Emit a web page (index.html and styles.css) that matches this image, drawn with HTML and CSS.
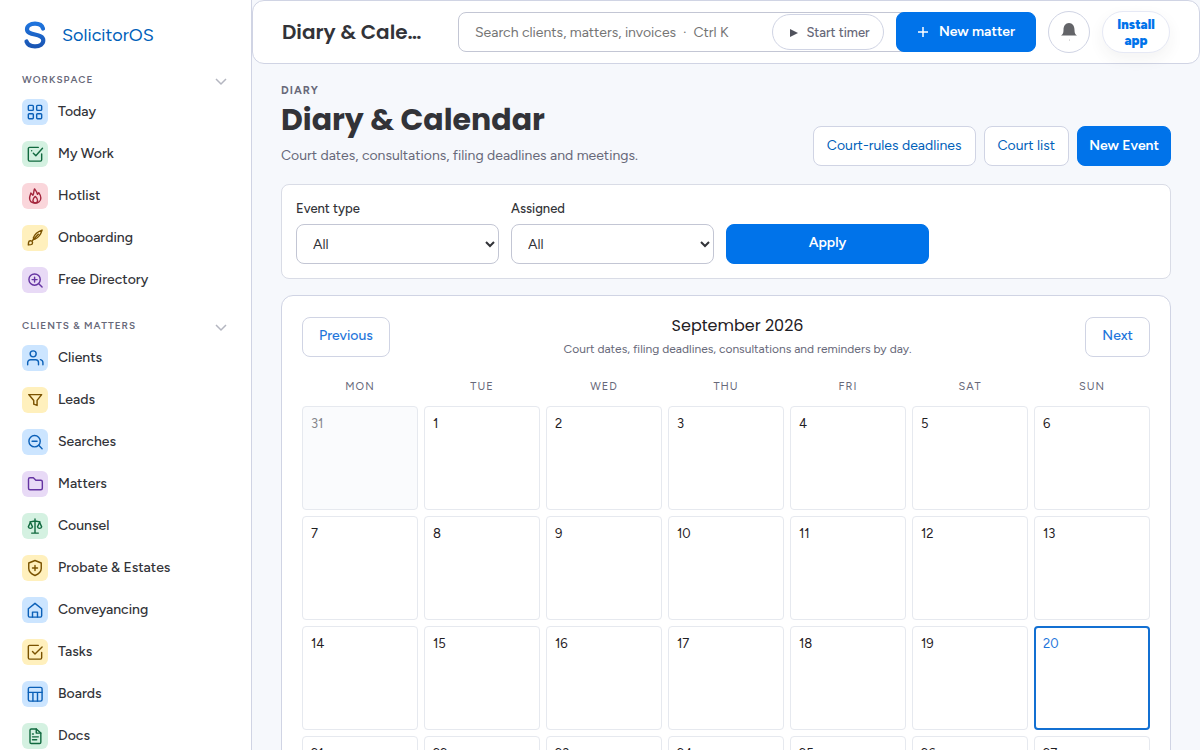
FILE: index.html
```
<!DOCTYPE html>
<html lang="en">
<head>
    <meta charset="UTF-8">
    <meta name="viewport" content="width=device-width, initial-scale=1.0">
    <title>Diary &amp; Calendar - SolicitorOS</title>
    <link rel="stylesheet" href="styles.css">
</head>
<body>
    <div class="app">
        <aside class="sidebar">
            <a class="brand" href="#">
                <svg class="brand-mark" viewBox="0 0 26 30" aria-hidden="true">
                    <defs>
                        <linearGradient id="brandFill" x1="0" y1="0" x2="0" y2="1">
                            <stop offset="0" stop-color="#1f74dd"/>
                            <stop offset="1" stop-color="#1a56b4"/>
                        </linearGradient>
                    </defs>
                    <path d="M21 8.500C20 5.200 17 3.700 13 3.700C8.300 3.700 5 6 5 9.300C5 16.500 21.300 12.500 21.300 20.300C21.300 24 18 26.300 13 26.300C8.500 26.300 5.500 24.500 4.500 21.500" fill="none" stroke="url(#brandFill)" stroke-width="4.200" stroke-linecap="round"/>
                </svg>
                <span>SolicitorOS</span>
            </a>

            <nav>
                <button class="nav-heading" type="button">
                    <span>Workspace</span>
                    <svg class="chevron" viewBox="0 0 12 12"><path d="M1 4l5 5 5-5"/></svg>
                </button>
                <a class="nav-item" href="#">
                    <span class="nav-icon blue"><svg viewBox="0 0 24 24"><rect x="4" y="4" width="6" height="6" rx="1"/><rect x="14" y="4" width="6" height="6" rx="1"/><rect x="4" y="14" width="6" height="6" rx="1"/><rect x="14" y="14" width="6" height="6" rx="1"/></svg></span>
                    Today
                </a>
                <a class="nav-item" href="#">
                    <span class="nav-icon green"><svg viewBox="0 0 24 24"><path d="M20 12v7a1.500 1.500 0 0 1-1.500 1.500h-13A1.500 1.500 0 0 1 4 19V5.500A1.500 1.500 0 0 1 5.500 4H16"/><path d="M10 11l3 3 8-9M8 8v.01"/></svg></span>
                    My Work
                </a>
                <a class="nav-item" href="#">
                    <span class="nav-icon red"><svg viewBox="0 0 24 24"><path d="M12 20.500c-4 0-6.500-2.300-6.500-6 0-2.500 1-3.500 1.500-6l2.500 2.500c1.500-2 .5-4.500 2-7.500 1.500 2 3 4 3.500 6.500l1.500-2c1.500 2 2.500 4 2.500 6.500 0 3.700-3 6-7 6z"/><path d="M12.300 12.500c-1.500 1.500-2.800 2.700-2.800 4.800 0 2 1.200 3 2.800 3s2.800-1 2.800-3c0-2.100-1.300-3.300-2.800-4.800z"/></svg></span>
                    Hotlist
                </a>
                <a class="nav-item" href="#">
                    <span class="nav-icon yellow"><svg viewBox="0 0 24 24"><path d="M20.500 2.500C16 4 11.500 7.500 10 12l1.500 1.500C15.500 12 19 7.500 20.500 2.500z"/><path d="M16 7.500L9 15"/><path d="M4 20.300l.3-3a2.400 2.400 0 1 1 2.700 2.700z"/></svg></span>
                    Onboarding
                </a>
                <a class="nav-item" href="#">
                    <span class="nav-icon purple"><svg viewBox="0 0 24 24"><circle cx="11.500" cy="11.500" r="6.800"/><path d="M8.500 11.500h6M11.500 8.500v6M16.500 16.500l4 4"/></svg></span>
                    Free Directory
                </a>

                <button class="nav-heading" type="button">
                    <span>Clients &amp; Matters</span>
                    <svg class="chevron" viewBox="0 0 12 12"><path d="M1 4l5 5 5-5"/></svg>
                </button>
                <a class="nav-item" href="#">
                    <span class="nav-icon blue"><svg viewBox="0 0 24 24"><circle cx="9.800" cy="7" r="3.600"/><path d="M3.200 20v-2.500a3.500 3.500 0 0 1 3.500-3.500h6a3.500 3.500 0 0 1 3.500 3.500V20M18.500 14a3.700 3.700 0 0 1 3 3.500V20"/></svg></span>
                    Clients
                </a>
                <a class="nav-item" href="#">
                    <span class="nav-icon yellow"><svg viewBox="0 0 24 24"><path d="M4.500 5.500h15.500l-5.500 7v6l-4-1.500v-4.500z"/></svg></span>
                    Leads
                </a>
                <a class="nav-item" href="#">
                    <span class="nav-icon blue"><svg viewBox="0 0 24 24"><circle cx="11.500" cy="11" r="6.800"/><path d="M8.500 11h6M16.500 16l4 4"/></svg></span>
                    Searches
                </a>
                <a class="nav-item" href="#">
                    <span class="nav-icon purple"><svg viewBox="0 0 24 24"><path d="M6 4.500h4l3 3h6a1.800 1.800 0 0 1 1.800 1.800V17a1.800 1.800 0 0 1-1.800 1.800H6A1.800 1.800 0 0 1 4.200 17V6.300A1.800 1.800 0 0 1 6 4.500z"/></svg></span>
                    Matters
                </a>
                <a class="nav-item" href="#">
                    <span class="nav-icon green"><svg viewBox="0 0 24 24"><path d="M12 3.500V20.500M8 20.500h8M6 7l6-1 6 1"/><path d="M6.500 7.500L4 13a2.600 2.600 0 0 0 5 0zM17.500 7.500L15 13a2.600 2.600 0 0 0 5 0z"/></svg></span>
                    Counsel
                </a>
                <a class="nav-item" href="#">
                    <span class="nav-icon yellow"><svg viewBox="0 0 24 24"><path d="M12 3l7.500 3v6.500c0 4-3 6.500-7.500 8.500-4.500-2-7.500-4.500-7.500-8.500V6z"/><path d="M9 12h6M12 9v6"/></svg></span>
                    Probate &amp; Estates
                </a>
                <a class="nav-item" href="#">
                    <span class="nav-icon blue"><svg viewBox="0 0 24 24"><path d="M4 10.500L12 4l8 6.500V19a1.500 1.500 0 0 1-1.500 1.500h-13A1.500 1.500 0 0 1 4 19z"/><path d="M9 20.500V14.500h6v6"/></svg></span>
                    Conveyancing
                </a>
                <a class="nav-item" href="#">
                    <span class="nav-icon yellow"><svg viewBox="0 0 24 24"><path d="M20 12.500V19a1.500 1.500 0 0 1-1.500 1.500h-13A1.500 1.500 0 0 1 4 19V5.500A1.500 1.500 0 0 1 5.500 4H16"/><path d="M9 11.500l3 3L20.500 6"/></svg></span>
                    Tasks
                </a>
                <a class="nav-item" href="#">
                    <span class="nav-icon blue"><svg viewBox="0 0 24 24"><rect x="4" y="4" width="16.500" height="16.500" rx="1.800"/><path d="M4 10h16.500M9.500 10v10.500M15 10v10.500"/></svg></span>
                    Boards
                </a>
                <a class="nav-item" href="#">
                    <span class="nav-icon green"><svg viewBox="0 0 24 24"><path d="M13.500 3.500V8.500H19"/><path d="M17.500 21h-10A1.500 1.500 0 0 1 6 19.500V5A1.500 1.500 0 0 1 7.500 3.500h6L19 8.500v11a1.500 1.500 0 0 1-1.500 1.500z"/><path d="M9 9.500h1M9 13h7M9 16.500h5"/></svg></span>
                    Docs
                </a>
            </nav>
        </aside>

        <div class="page">
            <header class="topbar">
                <div class="topbar-title">Diary &amp; Calendar</div>
                <input class="search" type="search" aria-label="Search" placeholder="Search clients, matters, invoices  ·  Ctrl K">
                <div class="topbar-actions">
                    <button class="timer" type="button">
                        <svg viewBox="0 0 8 10" aria-hidden="true"><path d="M0 1l8 4-8 4z"/></svg>
                        Start timer
                    </button>
                    <button class="btn btn-primary btn-matter" type="button">
                        <svg viewBox="0 0 12 12" aria-hidden="true"><path d="M6 1v10M1 6h10"/></svg>
                        New matter
                    </button>
                    <button class="bell" type="button" aria-label="Notifications">
                        <svg viewBox="0 0 16 18" aria-hidden="true"><path d="M0 12.500c1.500-.8 2.500-2.200 2.500-5.500C2.500 3 4.500 0 8 0s5.500 3 5.500 7c0 3.300 1 4.700 2.500 5.500z"/><circle cx="8.500" cy="17" r=".4"/></svg>
                    </button>
                    <button class="install" type="button">Install app</button>
                </div>
            </header>

            <main class="content">
                <div class="page-head">
                    <div>
                        <div class="eyebrow">Diary</div>
                        <h1>Diary &amp; Calendar</h1>
                        <p class="lead">Court dates, consultations, filing deadlines and meetings.</p>
                    </div>
                    <div class="page-actions">
                        <a class="btn" href="#">Court-rules deadlines</a>
                        <a class="btn" href="#">Court list</a>
                        <a class="btn btn-primary" href="#">New Event</a>
                    </div>
                </div>

                <form class="filters">
                    <div class="field">
                        <label for="event-type">Event type</label>
                        <select id="event-type">
                            <option>All</option>
                        </select>
                    </div>
                    <div class="field">
                        <label for="assigned">Assigned</label>
                        <select id="assigned">
                            <option>All</option>
                        </select>
                    </div>
                    <button class="btn btn-primary btn-raised" type="button">Apply</button>
                </form>

                <section class="calendar">
                    <div class="calendar-head">
                        <a class="btn btn-step btn-raised" href="#">Previous</a>
                        <div class="calendar-title">
                            <h2>September 2026</h2>
                            <p>Court dates, filing deadlines, consultations and reminders by day.</p>
                        </div>
                        <a class="btn btn-step btn-raised" href="#">Next</a>
                    </div>
                    <table class="month">
                        <thead>
                            <tr><th>Mon</th><th>Tue</th><th>Wed</th><th>Thu</th><th>Fri</th><th>Sat</th><th>Sun</th></tr>
                        </thead>
                        <tbody>
                            <tr><td class="outside">31</td><td>1</td><td>2</td><td>3</td><td>4</td><td>5</td><td>6</td></tr>
                            <tr><td>7</td><td>8</td><td>9</td><td>10</td><td>11</td><td>12</td><td>13</td></tr>
                            <tr><td>14</td><td>15</td><td>16</td><td>17</td><td>18</td><td>19</td><td class="today">20</td></tr>
                            <tr><td>21</td><td>22</td><td>23</td><td>24</td><td>25</td><td>26</td><td>27</td></tr>
                            <tr><td>28</td><td>29</td><td>30</td><td class="outside">1</td><td class="outside">2</td><td class="outside">3</td><td class="outside">4</td></tr>
                        </tbody>
                    </table>
                </section>
            </main>
        </div>
    </div>
</body>
</html>
```
FILE: styles.css
```
* {
    box-sizing: border-box;
}
body {
    margin: 0;
    font-family: Figtree, Inter, "Liberation Sans", sans-serif;
    font-size: 14px;
    line-height: 20px;
    color: #323338;
    background-color: #f6f8fc;
}
button, input, select {
    font: inherit;
    color: inherit;
}
button {
    cursor: pointer;
}
a {
    text-decoration: none;
}
h1, h2, p {
    margin: 0;
}
h1, h2, .topbar-title {
    font-family: Poppins, Figtree, Inter, sans-serif;
}
.app {
    display: flex;
    height: 100vh;
}

/* sidebar */
.sidebar {
    flex: 0 0 252px;
    padding: 15px 22px 0;
    background-color: #fff;
    border-right: 1px solid #d0d4e4;
    overflow-y: auto;
    scrollbar-width: none;
}
.brand {
    display: flex;
    align-items: center;
    gap: 14px;
    height: 40px;
    margin-bottom: 12px;
    font-size: 18px;
    color: #0060b9;
}
.brand-mark {
    width: 26px;
    height: 30px;
}
.nav-heading {
    display: flex;
    align-items: center;
    justify-content: space-between;
    width: 100%;
    height: 24px;
    padding: 2px 0 0;
    border: 0;
    background: none;
    font-size: 10px;
    font-weight: 600;
    letter-spacing: 1px;
    text-transform: uppercase;
    color: #676879;
}
.nav-item + .nav-heading {
    margin-top: 12px;
}
.chevron {
    width: 12px;
    height: 12px;
    margin: 2px 2px 0 0;
    fill: none;
    stroke: #b4b6c0;
    stroke-width: 1.5;
}
.nav-item {
    display: flex;
    align-items: center;
    gap: 10px;
    height: 42px;
    font-weight: 500;
    color: #323338;
}
.nav-icon {
    display: flex;
    align-items: center;
    justify-content: center;
    width: 26px;
    height: 26px;
    border-radius: 6px;
}
.nav-icon svg {
    width: 20px;
    height: 20px;
    fill: none;
    stroke: currentColor;
    stroke-width: 1.7;
    stroke-linecap: round;
    stroke-linejoin: round;
}
.blue {
    background-color: #cce5ff;
    color: #0b60b8;
}
.green {
    background-color: #d4f1e1;
    color: #11693f;
}
.red {
    background-color: #fad6db;
    color: #a3253c;
}
.yellow {
    background-color: #fff0bd;
    color: #7a5200;
}
.purple {
    background-color: #e8daf6;
    color: #6534a2;
}

/* top bar */
.page {
    flex: 1;
    min-width: 0;
    overflow-y: auto;
    scrollbar-width: none;
}
.topbar {
    display: flex;
    align-items: center;
    height: 64px;
    padding: 0 29px;
    background-color: #fff;
    border: 1px solid #d0d4e4;
    border-radius: 12px;
}
.topbar-title {
    flex: 0 0 144px;
    margin-right: 32px;
    font-size: 20px;
    font-weight: 600;
    line-height: 28px;
    white-space: nowrap;
    overflow: hidden;
    text-overflow: ellipsis;
}
.search {
    flex: 1;
    min-width: 0;
    height: 40px;
    padding: 0 16px;
    border: 1px solid #c3c6d4;
    border-radius: 8px;
    background-color: #fff;
}
.search::placeholder {
    color: #757575;
}
/* the actions sit over the right end of the search box */
.topbar-actions {
    position: relative;
    display: flex;
    align-items: center;
    gap: 12px;
    margin-left: -140px;
}
.timer {
    display: flex;
    align-items: center;
    justify-content: center;
    gap: 8px;
    width: 112px;
    height: 36px;
    padding: 2px 0 0 4px;
    border: 1px solid #d0d4e4;
    border-radius: 18px;
    background-color: #fff;
    font-size: 13px;
    font-weight: 500;
    color: #676879;
}
.timer svg {
    width: 8px;
    height: 10px;
    fill: #50525c;
}
.bell {
    display: flex;
    align-items: center;
    justify-content: center;
    width: 42px;
    height: 42px;
    padding: 0;
    border: 1px solid #d0d4e4;
    border-radius: 50%;
    background-color: #fff;
}
.bell svg {
    width: 16px;
    height: 18px;
    fill: #636468;
}
.install {
    width: 68px;
    height: 42px;
    padding: 2px 8px 0;
    border: 1px solid #e6e9f5;
    border-radius: 21px;
    background-color: #fff;
    box-shadow: 0 6px 16px rgba(50, 51, 56, 0.06);
    font-size: 13px;
    font-weight: 900;
    line-height: 16px;
    color: #0073ea;
}

/* buttons */
.btn {
    display: flex;
    align-items: center;
    justify-content: center;
    height: 40px;
    padding: 0 13px;
    border: 1px solid #d0d4e4;
    border-radius: 8px;
    background-color: #fff;
    color: #0060b9;
    white-space: nowrap;
}
.btn-primary {
    padding: 0 11px;
    border-color: #0073ea;
    background-color: #0073ea;
    font-weight: 600;
    color: #fff;
}
.btn-matter {
    gap: 10px;
    width: 140px;
}
.btn-matter svg {
    width: 12px;
    height: 12px;
    fill: none;
    stroke: #fff;
    stroke-width: 1.5;
}
.btn-step {
    padding: 0 16px;
    font-weight: 500;
    color: #1f76db;
}
.btn-raised {
    padding-bottom: 2px;
}

/* page */
.content {
    padding: 17px 29px 28px;
}
.page-head {
    display: flex;
    align-items: flex-end;
    justify-content: space-between;
    margin-bottom: 18px;
}
.eyebrow {
    font-size: 11px;
    font-weight: 700;
    letter-spacing: 1px;
    text-transform: uppercase;
    color: #676879;
}
h1 {
    font-size: 30px;
    font-weight: 700;
    line-height: 38px;
}
.lead {
    padding: 9px 0 2px;
    color: #676879;
    line-height: 16px;
}
.page-actions {
    display: flex;
    gap: 8px;
}
.filters {
    display: grid;
    grid-template-columns: repeat(3, minmax(0, 203px));
    align-items: end;
    gap: 12px;
    margin-bottom: 16px;
    padding: 14px;
    border: 1px solid #d9dce6;
    border-radius: 8px;
    background-color: #fff;
}
.field {
    display: grid;
    gap: 5px;
}
.field label {
    font-size: 13px;
    font-weight: 500;
}
.field select {
    width: 100%;
    height: 40px;
    padding: 0 0 0 12px;
    border: 1px solid #c3c6d4;
    border-radius: 8px;
    background-color: #fff;
}
.calendar {
    padding: 20px;
    border: 1px solid #d0d4e4;
    border-radius: 12px;
    background-color: #fff;
}
.calendar-head {
    display: flex;
    align-items: center;
    justify-content: space-between;
}
.calendar-title {
    text-align: center;
}
.calendar-title h2 {
    font-size: 16px;
    font-weight: 400;
    line-height: 20px;
    color: #1f2024;
}
.calendar-title p {
    padding-top: 4px;
    font-size: 12px;
    line-height: 18px;
    color: #676879;
}
.month {
    width: calc(100% + 12px);
    margin: 8px -6px 0;
    border-spacing: 6px;
    table-layout: fixed;
}
.month th {
    height: 28px;
    padding: 2px 0 0;
    font-size: 11px;
    font-weight: 400;
    letter-spacing: 1px;
    text-transform: uppercase;
    color: #676879;
}
.month td {
    height: 104px;
    padding: 7px 8px;
    border: 1px solid #e6e9ef;
    border-radius: 4px;
    vertical-align: top;
    font-size: 13px;
    color: #1f2024;
}
.month .outside {
    background-color: #fafbfd;
    color: #85868c;
}
.month .today {
    padding: 6px 7px;
    border: 2px solid #1370d2;
    color: #1f76db;
}
```
